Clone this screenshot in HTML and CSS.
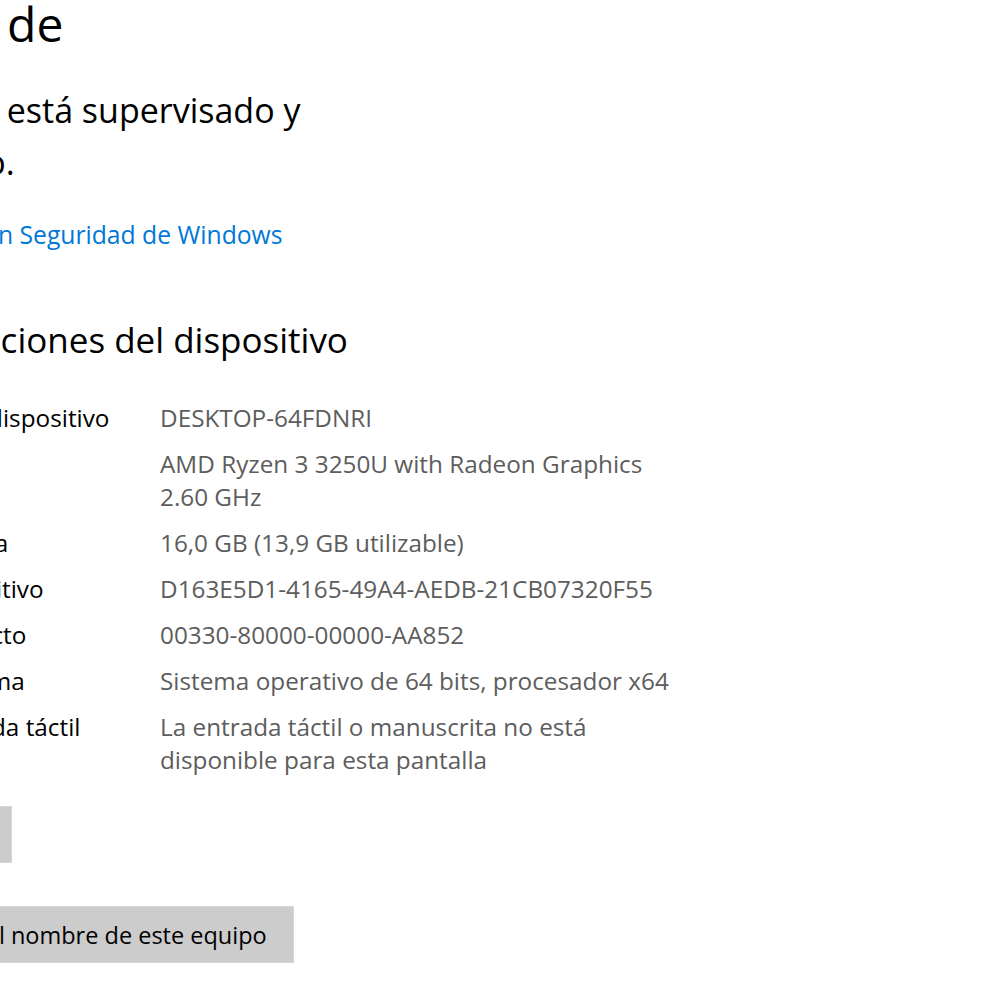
FILE: index.html
```html
<!DOCTYPE html>
<html lang="es">
<head>
<meta charset="utf-8">
<title>Acerca de</title>
<link rel="stylesheet" href="styles.css">
</head>
<body>
<main class="page">
  <h1 class="title">Acerca de</h1>
  <p class="status">El equipo está supervisado y protegido.</p>
  <a class="link" href="#">Ver detalles en Seguridad de Windows</a>
  <h2 class="section">Especificaciones del dispositivo</h2>
  <dl class="specs">
    <dt>Nombre del dispositivo</dt><dd>DESKTOP-64FDNRI</dd>
    <dt>Procesador</dt><dd>AMD Ryzen 3 3250U with Radeon Graphics 2.60 GHz</dd>
    <dt>RAM instalada</dt><dd>16,0 GB (13,9 GB utilizable)</dd>
    <dt>Id. del dispositivo</dt><dd>D163E5D1-4165-49A4-AEDB-21CB07320F55</dd>
    <dt>Id. del producto</dt><dd>00330-80000-00000-AA852</dd>
    <dt>Tipo de sistema</dt><dd>Sistema operativo de 64 bits, procesador x64</dd>
    <dt>Lápiz y entrada táctil</dt><dd>La entrada táctil o manuscrita no está disponible para esta pantalla</dd>
  </dl>
  <div class="actions">
    <button class="btn btn-copy" type="button">Copiar</button>
    <button class="btn" type="button">Cambiar el nombre de este equipo</button>
  </div>
</main>
</body>
</html>
```
FILE: styles.css
```css
html, body {
  margin: 0;
  padding: 0;
  background: #ffffff;
  overflow: hidden;
}
body {
  width: 1000px;
  height: 1000px;
  font-family: "Open Sans", "Noto Sans", "Liberation Sans", sans-serif;
  color: #000;
}
.page {
  margin-left: -140px;
  width: 900px;
  display: flex;
  flex-direction: column;
  align-items: flex-start;
}
.title {
  margin: -8px 0 0 -15px;
  font-weight: 400;
  font-size: 48px;
  line-height: 64px;
}
.status {
  margin: 28px 0 0 -9px;
  font-size: 34px;
  line-height: 52px;
  max-width: 480px;
}
.link {
  margin: 29px 0 0 -17px;
  font-size: 24.7px;
  line-height: 36px;
  color: #0078d7;
  text-decoration: none;
}
.section {
  margin: 63px 0 0 -19px;
  font-weight: 400;
  font-size: 35px;
  line-height: 48px;
}
.specs {
  margin: 37px 0 0 -13px;
  display: grid;
  grid-template-columns: 313px 515px;
  row-gap: 13px;
  font-size: 24.3px;
  line-height: 33px;
}
.specs dt {
  margin: 0;
}
.specs dd {
  margin: 0;
  color: #5d5d5d;
}
.actions {
  margin-top: 30px;
  display: flex;
  flex-direction: column;
  align-items: flex-start;
  gap: 43px;
}
.btn {
  font-family: inherit;
  font-size: 23.5px;
  color: #000;
  background: #cccccc;
  border: 1px solid #d6d6d6;
  height: 57px;
  padding: 0 26px;
}
.btn-copy {
  min-width: 152px;
}
```
